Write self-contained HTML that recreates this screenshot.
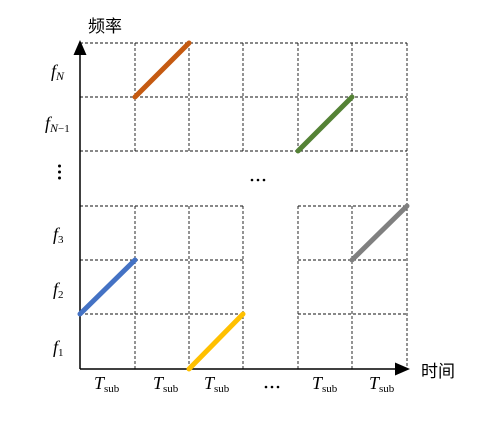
<!DOCTYPE html>
<html><head><meta charset="utf-8"><style>
html,body{margin:0;padding:0;background:#fff;width:498px;height:421px;overflow:hidden}
svg{display:block}
.f{font-family:"Liberation Serif",serif;font-style:italic;font-size:18px}
.s{font-family:"Liberation Serif",serif;font-style:normal;font-size:11px}
.si{font-family:"Liberation Serif",serif;font-style:italic;font-size:12px}
.c{font-family:"Liberation Sans","Noto Sans CJK SC",sans-serif;font-size:17px}
</style></head><body>
<svg width="498" height="421" viewBox="0 0 498 421">
<g stroke="#111" stroke-width="0.9" stroke-dasharray="3,2" fill="none">
<line x1="80" y1="43" x2="407" y2="43"/>
<line x1="80" y1="97" x2="407" y2="97"/>
<line x1="80" y1="151" x2="407" y2="151"/>
<line x1="80" y1="206" x2="243" y2="206"/><line x1="298" y1="206" x2="407" y2="206"/>
<line x1="80" y1="260" x2="243" y2="260"/><line x1="298" y1="260" x2="407" y2="260"/>
<line x1="80" y1="314" x2="243" y2="314"/><line x1="298" y1="314" x2="407" y2="314"/>
<line x1="135" y1="43" x2="135" y2="151"/><line x1="135" y1="206" x2="135" y2="369"/>
<line x1="189" y1="43" x2="189" y2="151"/><line x1="189" y1="206" x2="189" y2="369"/>
<line x1="243" y1="43" x2="243" y2="151"/><line x1="243" y1="206" x2="243" y2="369"/>
<line x1="298" y1="43" x2="298" y2="151"/><line x1="298" y1="206" x2="298" y2="369"/>
<line x1="352" y1="43" x2="352" y2="151"/><line x1="352" y1="206" x2="352" y2="369"/>
<line x1="407" y1="43" x2="407" y2="369"/>
</g>
<g stroke="#000" stroke-width="1.5">
<line x1="80" y1="52" x2="80" y2="369"/>
<line x1="80" y1="369" x2="398" y2="369"/>
</g>
<polygon points="80,40 73.5,55 86.5,55" fill="#000"/>
<polygon points="410,369 395,362.5 395,375.5" fill="#000"/>
<g stroke-width="5" stroke-linecap="round">
<line x1="135" y1="97" x2="189" y2="43" stroke="#c55a11"/>
<line x1="298" y1="151" x2="352" y2="97" stroke="#548235"/>
<line x1="80" y1="314" x2="135" y2="260" stroke="#4472c4"/>
<line x1="189" y1="369" x2="243" y2="314" stroke="#ffc000"/>
<line x1="352" y1="260" x2="407" y2="206" stroke="#808080"/>
</g>
<text class="c" x="88" y="32">频率</text>
<text class="c" x="421" y="377">时间</text>
<text class="f" x="51" y="77">f<tspan class="si" dy="3">N</tspan></text>
<text class="f" x="45" y="129">f<tspan class="si" dy="3">N</tspan><tspan class="s">−1</tspan></text>
<g fill="#000"><circle cx="59.5" cy="166" r="1.5"/><circle cx="59.5" cy="172" r="1.5"/><circle cx="59.5" cy="178" r="1.5"/>
<circle cx="252" cy="180" r="1.3"/><circle cx="258" cy="180" r="1.3"/><circle cx="264" cy="180" r="1.3"/>
<circle cx="266" cy="387" r="1.3"/><circle cx="272" cy="387" r="1.3"/><circle cx="278" cy="387" r="1.3"/></g>
<text class="f" x="53" y="240">f<tspan class="s" dy="3">3</tspan></text>
<text class="f" x="53" y="295">f<tspan class="s" dy="3">2</tspan></text>
<text class="f" x="53" y="353">f<tspan class="s" dy="3">1</tspan></text>
<g class="f">
<text x="94" y="389">T<tspan class="s" dy="3">sub</tspan></text>
<text x="153" y="389">T<tspan class="s" dy="3">sub</tspan></text>
<text x="204" y="389">T<tspan class="s" dy="3">sub</tspan></text>
<text x="312" y="389">T<tspan class="s" dy="3">sub</tspan></text>
<text x="369" y="389">T<tspan class="s" dy="3">sub</tspan></text>
</g>
</svg>
</body></html>
